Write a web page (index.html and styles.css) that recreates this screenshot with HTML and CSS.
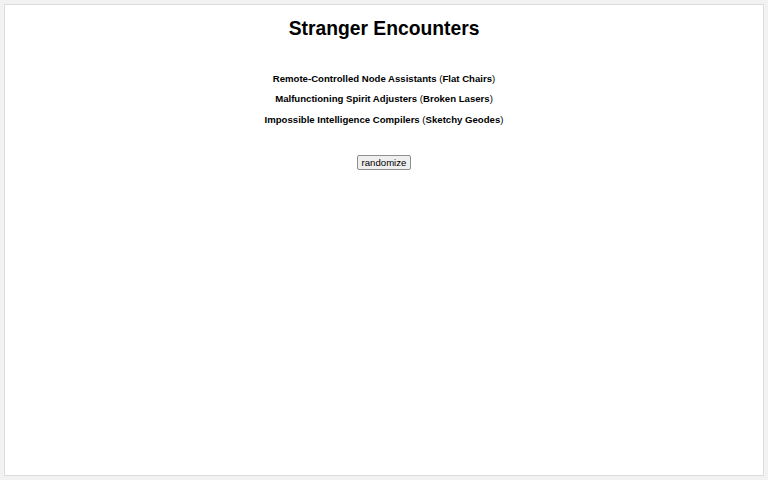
FILE: index.html
```html
<!DOCTYPE html>
<html lang="en">
<head>
  <meta charset="UTF-8">
  <title>Stranger Encounters</title>
  <link rel="stylesheet" href="styles.css">
</head>
<body>
  <div class="page">
    <h1 class="title">Stranger Encounters</h1>

    <!-- generated pairs -->
    <ul class="list">
      <li><b>Remote-Controlled Node Assistants</b> (<b>Flat Chairs</b>)</li>
      <li><b>Malfunctioning Spirit Adjusters</b> (<b>Broken Lasers</b>)</li>
      <li><b>Impossible Intelligence Compilers</b> (<b>Sketchy Geodes</b>)</li>
    </ul>

    <button class="btn">randomize</button>
  </div>
</body>
</html>
```

FILE: styles.css
```css
html, body {
  margin: 0;
  height: 100%;
}

body {
  background: #f2f2f2;
  padding: 4px;
  box-sizing: border-box;
  font-family: "Liberation Sans", Arial, sans-serif;
  color: #000;
}

.page {
  background: #fff;
  border: 1px solid #dcdcdc;
  height: 100%;
  box-sizing: border-box;
  text-align: center;
}

.title {
  font-size: 19.3px;
  font-weight: bold;
  margin: 0;
  padding-top: 13px;
}

.list {
  list-style: none;
  margin: 31.5px 0 0;
  padding: 0;
  font-size: 9.6px;
}

.list li {
  line-height: 13px;
  margin-bottom: 7.5px;
}

.btn {
  margin-top: 22px;
  font-family: "Liberation Sans", Arial, sans-serif;
  font-size: 9.6px;
  padding: 1px 4px;
  background: #efefef;
  border: 1px solid #8f8f8f;
  border-radius: 2px;
  color: #000;
}
```
